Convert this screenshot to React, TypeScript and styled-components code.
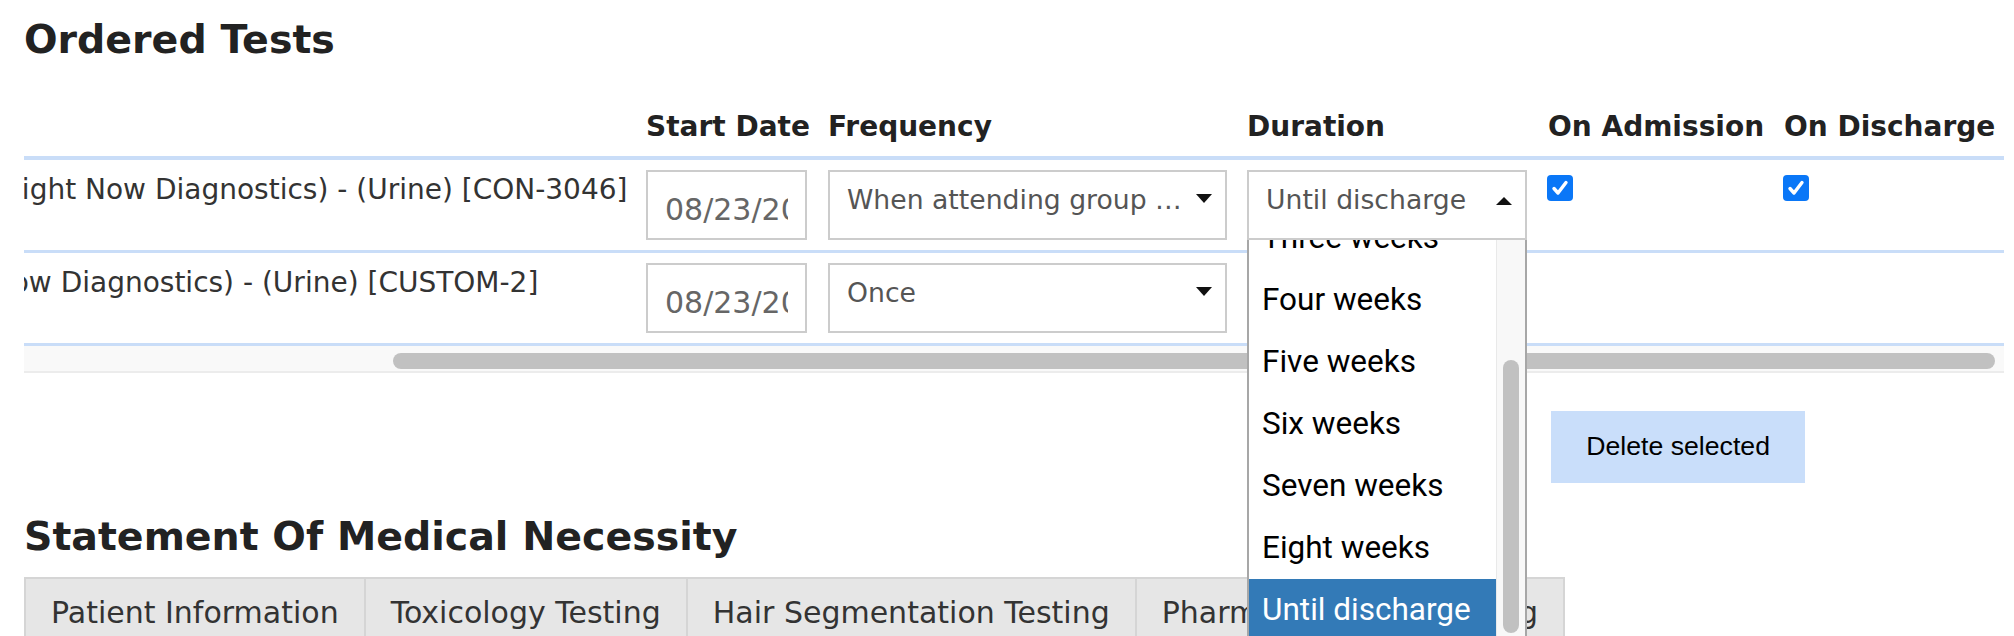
import React from 'react';
import styled, { createGlobalStyle, css } from 'styled-components';

const GlobalStyle = createGlobalStyle`
    html, body {
        margin: 0;
        padding: 0;
        overflow: hidden;
        background: #fff;
    }
    body {
        font-family: "DejaVu Sans", Verdana, sans-serif;
        color: #333;
    }
`;

// name | start date | frequency | duration | on admission | on discharge
const COLUMNS = '929px 182px 419px 301px 236px 220px';

const Page = styled.div`
    padding: 0 10px 0 24px;
`;

const SectionTitle = styled.h2<{ $top: number }>`
    margin: ${(p) => p.$top}px 0 0;
    font-size: 39.5px;
    line-height: 43.5px;
    font-weight: bold;
    color: #222;
`;

const TableViewport = styled.div`
    display: flex;
    justify-content: flex-end;
    overflow-x: clip;
    overflow-y: visible;
`;

const Table = styled.div`
    flex: 0 0 auto;
    width: 2287px;
`;

const HeaderRow = styled.div`
    display: grid;
    grid-template-columns: ${COLUMNS};
    align-items: end;
    padding: 45px 0 9px;
    border-bottom: 4px solid #c9ddf8;
`;

const HeadCell = styled.div`
    font-size: 28px;
    line-height: 40px;
    font-weight: bold;
    color: #222;
    white-space: nowrap;
`;

const Row = styled.div`
    display: grid;
    grid-template-columns: ${COLUMNS};
    align-items: start;
    padding: 10px 0;
    border-bottom: 3px solid #c9ddf8;
`;

const Cell = styled.div`
    min-width: 0;
`;

const NameCell = styled.div`
    padding-right: 20px;
    font-size: 28px;
    line-height: 40px;
    color: #333;
    white-space: nowrap;
`;

const DateInput = styled.input`
    box-sizing: border-box;
    width: 161px;
    height: 70px;
    margin: 0;
    padding: 10px 17px 0;
    border: 2px solid #ccc;
    border-radius: 0;
    outline: none;
    background: #fff;
    font-family: "DejaVu Sans", Verdana, sans-serif;
    font-size: 30px;
    color: #666;
`;

const DropdownWrap = styled.div<{ $width: number; $open?: boolean }>`
    position: relative;
    width: ${(p) => p.$width}px;
    z-index: ${(p) => (p.$open ? 5 : 'auto')};
`;

const SelectBox = styled.div`
    box-sizing: border-box;
    display: flex;
    align-items: flex-start;
    height: 70px;
    padding: 8px 13px 0 17px;
    border: 2px solid #ccc;
    background: #fff;
    color: #555;
    font-size: 26.67px;
    line-height: 40px;
`;

const SelectValue = styled.span`
    flex: 1;
    min-width: 0;
    overflow: hidden;
    white-space: nowrap;
    text-overflow: ellipsis;
`;

const Caret = styled.span<{ $open?: boolean }>`
    flex: 0 0 auto;
    width: 0;
    height: 0;
    margin-left: 7px;
    border-left: 8px solid transparent;
    border-right: 8px solid transparent;
    ${(p) =>
        p.$open
            ? css`
                  margin-top: 17px;
                  border-bottom: 8px solid #111;
              `
            : css`
                  margin-top: 14px;
                  border-top: 9px solid #111;
              `}
`;

const OptionList = styled.div`
    position: absolute;
    top: 100%;
    left: 0;
    box-sizing: border-box;
    display: flex;
    width: 100%;
    height: 403px;
    border: 2px solid #a7a7a7;
    border-top: none;
    background: #fff;
`;

const Options = styled.div`
    flex: 1;
    display: flex;
    flex-direction: column;
    justify-content: flex-end;
    overflow: hidden;
`;

const Option = styled.div<{ $selected?: boolean }>`
    flex: 0 0 62px;
    padding-left: 13px;
    font-family: Roboto, "Noto Sans", sans-serif;
    font-size: 31.5px;
    line-height: 62px;
    white-space: nowrap;
    color: #000;
    ${(p) =>
        p.$selected &&
        css`
            background: #337ab7;
            color: #fff;
        `}
`;

const ListTrack = styled.div`
    flex: 0 0 28px;
    background: #f8f8f8;
    border-left: 1px solid #e9e9e9;
`;

const ListThumb = styled.div`
    width: 16px;
    height: 273px;
    margin: 120px auto 0;
    border-radius: 8px;
    background: #c1c1c1;
`;

const CheckBox = styled.span`
    display: inline-flex;
    align-items: center;
    justify-content: center;
    width: 26px;
    height: 26px;
    margin: 5px 0 0 -1px;
    border-radius: 4px;
    background: #0a77f7;
`;

const ScrollTrack = styled.div`
    display: flex;
    justify-content: flex-end;
    align-items: flex-start;
    height: 25px;
    padding: 0 9px;
    background: #f9f9f9;
    border-bottom: 2px solid #ececec;
`;

const ScrollThumb = styled.div<{ $width: number }>`
    width: ${(p) => p.$width}px;
    height: 16px;
    margin-top: 7px;
    border-radius: 8px;
    background: #c1c1c1;
`;

const Actions = styled.div`
    display: flex;
    justify-content: flex-end;
    margin-top: 38px;
    padding-right: 199px;
`;

const DeleteButton = styled.button`
    height: 72px;
    padding: 0 35px;
    border: none;
    border-radius: 0;
    background: #c9defa;
    color: #000;
    font-family: "Liberation Sans", Arial, sans-serif;
    font-size: 26.67px;
`;

const Tabs = styled.div`
    display: flex;
    margin-top: 19px;
`;

const Tab = styled.div`
    padding: 14px 25px 20px;
    border: 2px solid #d5d5d5;
    border-left: none;
    background: #e6e6e6;
    color: #333;
    font-size: 30px;
    line-height: 40px;
    white-space: nowrap;
    &:first-child {
        border-left: 2px solid #d5d5d5;
    }
`;

const durations = [
    'Once',
    'One week',
    'Two weeks',
    'Three weeks',
    'Four weeks',
    'Five weeks',
    'Six weeks',
    'Seven weeks',
    'Eight weeks',
    'Until discharge',
];

const tabs = ['Patient Information', 'Toxicology Testing', 'Hair Segmentation Testing', 'Pharmacogenetic Testing'];

function Check() {
    return (
        <CheckBox>
            <svg width="18" height="18" viewBox="0 0 18 18">
                <path d="M3 9.5 L7 14 L15 3.5" fill="none" stroke="#fff" strokeWidth="3.4" strokeLinecap="round" strokeLinejoin="round" />
            </svg>
        </CheckBox>
    );
}

function Select({ value, width, open }: { value: string; width: number; open?: boolean }) {
    return (
        <DropdownWrap $width={width} $open={open}>
            <SelectBox>
                <SelectValue>{value}</SelectValue>
                <Caret $open={open} />
            </SelectBox>
            {open && (
                <OptionList>
                    <Options>
                        {durations.map((d) => (
                            <Option key={d} $selected={d === value}>
                                {d}
                            </Option>
                        ))}
                    </Options>
                    <ListTrack>
                        <ListThumb />
                    </ListTrack>
                </OptionList>
            )}
        </DropdownWrap>
    );
}

interface OrderedTest {
    name: string;
    frequency: string;
    duration: string;
    checks: boolean;
    open?: boolean;
}

const tests: OrderedTest[] = [
    {
        name: 'Confirmation Panel (Right Now Diagnostics) - (Urine) [CON-3046]',
        frequency: 'When attending group sessions',
        duration: 'Until discharge',
        checks: true,
        open: true,
    },
    {
        name: 'Custom Test (Right Now Diagnostics) - (Urine) [CUSTOM-2]',
        frequency: 'Once',
        duration: 'Until discharge',
        checks: false,
    },
];

export default function App() {
    return (
        <>
            <GlobalStyle />
            <Page>
                <SectionTitle $top={18}>Ordered Tests</SectionTitle>
                <TableViewport>
                    <Table>
                        <HeaderRow>
                            <HeadCell />
                            <HeadCell>Start Date</HeadCell>
                            <HeadCell>Frequency</HeadCell>
                            <HeadCell>Duration</HeadCell>
                            <HeadCell>On Admission</HeadCell>
                            <HeadCell>On Discharge</HeadCell>
                        </HeaderRow>
                        {tests.map((t) => (
                            <Row key={t.name}>
                                <NameCell>{t.name}</NameCell>
                                <Cell>
                                    <DateInput readOnly value="08/23/2023" />
                                </Cell>
                                <Cell>
                                    <Select value={t.frequency} width={399} />
                                </Cell>
                                <Cell>
                                    <Select value={t.duration} width={280} open={t.open} />
                                </Cell>
                                <Cell>{t.checks && <Check />}</Cell>
                                <Cell>{t.checks && <Check />}</Cell>
                            </Row>
                        ))}
                    </Table>
                </TableViewport>
                <ScrollTrack>
                    <ScrollThumb $width={1602} />
                </ScrollTrack>
                <Actions>
                    <DeleteButton>Delete selected</DeleteButton>
                </Actions>
                <SectionTitle $top={32}>Statement Of Medical Necessity</SectionTitle>
                <Tabs>
                    {tabs.map((t) => (
                        <Tab key={t}>{t}</Tab>
                    ))}
                </Tabs>
            </Page>
        </>
    );
}
